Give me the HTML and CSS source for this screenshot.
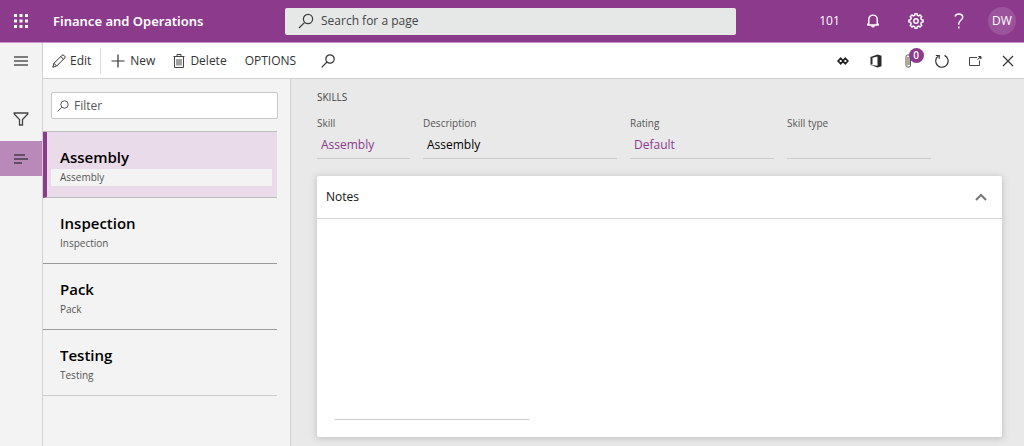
FILE: index.html
```html
<!DOCTYPE html>
<html lang="en">
<head>
<meta charset="utf-8">
<meta name="viewport" content="width=device-width, initial-scale=1">
<title>Finance and Operations</title>
<link rel="stylesheet" href="styles.css">
</head>
<body>
<div class="app">
  <header class="topbar">
    <div class="brand">
      <button class="waffle" type="button" aria-label="App launcher">
        <svg width="16" height="16" viewBox="0 0 16 16" fill="#fff"><path d="M1 1h3v3H1zM6.500 1h3v3h-3zM12 1h3v3h-3zM1 6.500h3v3H1zM6.500 6.500h3v3h-3zM12 6.500h3v3h-3zM1 12h3v3H1zM6.500 12h3v3h-3zM12 12h3v3h-3z"/></svg>
      </button>
      <a class="brand-name" href="#">Finance and Operations</a>
    </div>
    <div class="page-search">
      <svg width="16" height="16" viewBox="0 0 16 16" fill="none" stroke="#3a3a3a" stroke-width="1.200"><circle cx="10" cy="6" r="4.600"/><path d="M6.700 9.300 1 15"/></svg>
      <input class="page-search-input" type="text" placeholder="Search for a page" aria-label="Search for a page">
    </div>
    <nav class="top-actions" aria-label="Account">
      <button class="top-btn" type="button">101</button>
      <button class="top-btn" type="button" aria-label="Notifications">
        <svg width="14" height="16" viewBox="0 0 14 16" fill="none" stroke="#fff" stroke-width="1.400"><path d="M1.300 12h11.400M2.800 12V6.300a4.200 4.200 0 0 1 8.400 0V12M1.500 12l1.300-2M12.500 12l-1.300-2"/><path d="M5 12.500h4a2 2 0 0 1-4 0z" fill="#fff" stroke="none"/></svg>
      </button>
      <button class="top-btn" type="button" aria-label="Settings">
        <svg width="16" height="16" viewBox="0 0 16 16" fill="none" stroke="#fff" stroke-width="1.400"><path d="M6.700 2.300 7 .8h2l.3 1.500 1.500.6L12 2l1.700 1.700-.9 1.400.6 1.500 1.700.4v2l-1.700.4-.6 1.500.9 1.400L12 14l-1.300-.9-1.500.6L9 15.200H7l-.3-1.500-1.500-.6L4 14l-1.700-1.700.9-1.400-.6-1.500L.9 9V7l1.700-.4.6-1.500-.9-1.400L4 2l1.200.9z"/><circle cx="8" cy="8" r="2.200"/></svg>
      </button>
      <button class="top-btn" type="button" aria-label="Help">
        <svg width="10" height="16" viewBox="0 0 10 16" fill="none" stroke="#fff" stroke-width="1.400"><path d="M1 3.500C1.500 1.800 3 1 4.800 1 7 1 8.700 2.200 8.700 4.200 8.700 7 4.800 7.500 4.800 10.500v1.300"/><path d="M4.800 13.500v2"/></svg>
      </button>
      <button class="top-btn top-account" type="button" aria-label="Account DW"><span class="avatar">DW</span></button>
    </nav>
  </header>

  <div class="shell">
    <nav class="rail" aria-label="Navigation">
      <button class="rail-btn rail-menu" type="button" aria-label="Expand navigation">
        <svg width="16" height="12" viewBox="0 0 16 12" stroke="#555" stroke-width="1.400"><path d="M1 2h14M1 6h14M1 10h14"/></svg>
      </button>
      <button class="rail-btn rail-filter" type="button" aria-label="Filters">
        <svg width="16" height="14" viewBox="0 0 16 14" fill="none" stroke="#444" stroke-width="1.300"><path d="M1.200 1h13.600v1L9.500 7.500V13h-3V7.500L1.200 2z"/></svg>
      </button>
      <button class="rail-btn rail-active" type="button" aria-label="List">
        <svg width="16" height="10" viewBox="0 0 16 10" stroke="#4a3a4c" stroke-width="1.300"><path d="M1 1h11M1 5h14M1 9h8"/></svg>
      </button>
    </nav>

    <div class="workspace">
      <div class="toolbar">
        <div class="tools">
          <button class="tool tool-edit" type="button">
            <svg width="14" height="14" viewBox="0 0 14 14" fill="none" stroke="#333"><path d="M.8 13.200 2 9.300 10 1.300a1.300 1.300 0 0 1 1.800 0l.9.900a1.300 1.300 0 0 1 0 1.800L4.700 12zM2 9.300 4.700 12M8.800 2.500l2.700 2.700"/></svg>
            <span>Edit</span>
          </button>
          <button class="tool tool-new" type="button">
            <svg width="14" height="14" viewBox="0 0 14 14" stroke="#333" stroke-width="1.200"><path d="M7 .5v13M.5 7h13"/></svg>
            <span>New</span>
          </button>
          <button class="tool tool-delete" type="button">
            <svg width="12" height="14" viewBox="0 0 12 14" fill="none" stroke="#444"><path d="M.5 2.500h11M4 2.500v-2h4v2M1.500 2.500v11h9v-11M4 5v6.500M6 5v6.500M8 5v6.500"/></svg>
            <span>Delete</span>
          </button>
          <button class="tool tool-options" type="button">OPTIONS</button>
          <button class="tool" type="button" aria-label="Search actions">
            <svg width="14" height="14" viewBox="0 0 14 14" fill="none" stroke="#333" stroke-width="1.200"><circle cx="9" cy="5" r="4.200"/><path d="M6 8 .7 13.300"/></svg>
          </button>
        </div>
        <div class="tool-icons">
          <button class="icon-btn" type="button" aria-label="Connect">
            <svg width="12" height="8" viewBox="0 0 12 8" fill="none" stroke="#222" stroke-width="1.700"><path d="M3.700 1.300 6.300 4 3.700 6.700 1.100 4zM8.300 1.300 10.900 4 8.300 6.700 5.700 4z"/></svg>
          </button>
          <button class="icon-btn" type="button" aria-label="Open in Microsoft Office">
            <svg width="12" height="14" viewBox="0 0 12 14" fill="#2b2b2b"><path fill-rule="evenodd" d="M.5 3 7.500.5l4 1.200v10.600l-4 1.200L.5 11l7 .8V2.600L2.500 3.700v6.500L.5 11z"/></svg>
          </button>
          <button class="icon-btn" type="button" aria-label="Attachments, 0">
            <span class="attach">
              <svg width="8" height="14" viewBox="0 0 8 14" fill="none" stroke="#555"><path d="M1 2.500v9a1.500 1.500 0 0 0 1.500 1.500h1.500a1.500 1.500 0 0 0 1.500-1.500v-9a1.500 1.500 0 0 0-1.500-1.500h-1.500a1.500 1.500 0 0 0-1.500 1.500zM4 3v8"/><path d="M2.500 3v8.500" stroke="#c9a36b"/></svg>
              <span class="badge">0</span>
            </span>
          </button>
          <button class="icon-btn" type="button" aria-label="Refresh">
            <svg width="14" height="14" viewBox="0 0 14 14" fill="none" stroke="#333" stroke-width="1.200"><path d="M9.500 1.400A6.200 6.200 0 1 1 3.300 2"/><path d="M.8 1.500h3.400v3.300"/></svg>
          </button>
          <button class="icon-btn" type="button" aria-label="Open in new window">
            <svg width="14" height="10" viewBox="0 0 14 10" fill="none" stroke="#444"><path d="M9 1.500H1.500v8h10V4.500"/><path d="M9.500 3.500 12 1.500"/><path d="M10.500.500h2.500v2.500z" fill="#444"/></svg>
          </button>
          <button class="icon-btn" type="button" aria-label="Close">
            <svg width="12" height="12" viewBox="0 0 12 12" stroke="#333" stroke-width="1.200"><path d="M1 1l10 10M11 1 1 11"/></svg>
          </button>
        </div>
      </div>

      <div class="content">
        <aside class="list-pane">
          <div class="filter">
            <svg width="12" height="12" viewBox="0 0 12 12" fill="none" stroke="#555"><circle cx="7.500" cy="4.500" r="3.700"/><path d="M4.800 7.200.6 11.400"/></svg>
            <input class="filter-input" type="text" placeholder="Filter" aria-label="Filter">
          </div>
          <ul class="skills">
            <li><button class="skill skill-selected" type="button"><span class="skill-name">Assembly</span><span class="skill-desc">Assembly</span></button></li>
            <li><button class="skill" type="button"><span class="skill-name">Inspection</span><span class="skill-desc">Inspection</span></button></li>
            <li><button class="skill" type="button"><span class="skill-name">Pack</span><span class="skill-desc">Pack</span></button></li>
            <li><button class="skill skill-last" type="button"><span class="skill-name">Testing</span><span class="skill-desc">Testing</span></button></li>
          </ul>
        </aside>

        <main class="detail">
          <h1 class="detail-title">SKILLS</h1>
          <div class="fields">
            <div class="field field-skill"><label for="skill">Skill</label><input class="value value-link" id="skill" type="text" value="Assembly" readonly></div>
            <div class="field field-description"><label for="description">Description</label><input class="value" id="description" type="text" value="Assembly" readonly></div>
            <div class="field field-rating"><label for="rating">Rating</label><input class="value value-link" id="rating" type="text" value="Default" readonly></div>
            <div class="field field-type"><label for="type">Skill type</label><input class="value" id="type" type="text" readonly></div>
          </div>
          <section class="card">
            <button class="card-head" type="button" aria-expanded="true">
              <span>Notes</span>
              <svg width="12" height="8" viewBox="0 0 12 8" fill="none" stroke="#777" stroke-width="2"><path d="M1 7l5-5 5 5"/></svg>
            </button>
            <div class="card-body"><textarea class="notes" aria-label="Notes"></textarea></div>
          </section>
        </main>
      </div>
    </div>
  </div>
</div>
</body>
</html>
```
FILE: styles.css
```css
* { box-sizing: border-box; }

body {
  margin: 0;
  font-family: "Open Sans", "Noto Sans", sans-serif;
  font-size: 12px;
  line-height: 16px;
  color: #333;
}

button, input, textarea {
  margin: 0;
  padding: 0;
  border: 0;
  border-radius: 0;
  background: none;
  font: inherit;
  color: inherit;
  outline: 0;
}

button { cursor: pointer; }
svg { display: block; flex: none; }

.app {
  display: flex;
  flex-direction: column;
  min-height: 100vh;
}

/* Top bar */
.topbar {
  display: grid;
  grid-template-columns: 285px minmax(120px, 451px) 1fr;
  align-items: center;
  height: 43px;
  background: #8c3a8c;
  border-bottom: 1px solid #c995c9;
  color: #fff;
}

.brand { display: flex; align-items: center; }
.waffle { display: flex; justify-content: center; width: 42px; }
.brand-name {
  padding-left: 11px;
  color: #fff;
  font-family: "Noto Sans", "Open Sans", sans-serif;
  font-size: 13px;
  font-weight: 600;
  text-decoration: none;
}

.page-search {
  display: flex;
  align-items: center;
  gap: 7px;
  height: 27px;
  padding: 0 13px;
  border-radius: 2px;
  background: #e6e8e8;
}
.page-search-input { flex: 1; min-width: 0; }
.page-search-input::placeholder { color: #444; opacity: 1; }

.top-actions { display: flex; justify-content: flex-end; }
.top-btn {
  display: flex;
  align-items: center;
  justify-content: center;
  width: 43px;
  height: 42px;
}
.top-account { width: 44px; }
.avatar {
  width: 28px;
  border-radius: 50%;
  background: #9b539b;
  line-height: 28px;
}

/* Navigation rail */
.shell { display: flex; flex: 1; }
.rail {
  display: flex;
  flex-direction: column;
  width: 43px;
  border-right: 1px solid #d2d2d2;
  background: #f3f3f3;
}
.rail-btn {
  display: flex;
  align-items: center;
  justify-content: center;
  height: 35px;
}
.rail-menu { margin-bottom: 23px; }
.rail-filter { margin-bottom: 5px; }
.rail-active { background: #b889b9; }

.workspace { display: flex; flex: 1; flex-direction: column; min-width: 0; }

/* Action bar */
.toolbar {
  display: flex;
  justify-content: space-between;
  height: 36px;
  border-bottom: 1px solid #d0d0d0;
  background: #fff;
}
.tools, .tool-icons, .tool { display: flex; align-items: center; }
.tool { gap: 5px; }
.tool-edit {
  gap: 4px;
  height: 26px;
  padding: 0 9px;
  border-right: 1px solid #ddd;
}
.tool-new { padding-left: 10px; }
.tool-delete { padding-left: 18px; }
.tool-options { padding: 0 25px 0 18px; }
.icon-btn {
  display: flex;
  align-items: center;
  justify-content: center;
  width: 33px;
  height: 35px;
}
.attach { position: relative; }
.badge {
  position: absolute;
  top: -6px;
  left: 4px;
  width: 15px;
  border-radius: 50%;
  background: #8c3a8c;
  color: #fff;
  font-size: 10px;
  font-weight: 600;
  line-height: 15px;
}

/* Record list */
.content { display: flex; flex: 1; }
.list-pane {
  flex: none;
  width: 248px;
  padding-top: 13px;
  border-right: 1px solid #cfcfcf;
  background: #f3f3f3;
}
.filter {
  display: flex;
  align-items: center;
  gap: 5px;
  height: 27px;
  margin: 0 12px 12px 8px;
  padding: 0 5px;
  border: 1px solid #c8c8c8;
  border-radius: 2px;
  background: #fff;
}
.filter-input { flex: 1; min-width: 0; }
.filter-input::placeholder { color: #555; opacity: 1; }

.skills { margin: 0 13px 0 0; padding: 0; border-top: 1px solid #bdbdbd; list-style: none; }
.skill {
  display: flex;
  flex-direction: column;
  width: 100%;
  padding: 14px 5px 11px 8px;
  border-bottom: 1px solid #999;
  text-align: left;
}
.skill span { padding-left: 9px; }
.skill-selected { padding-left: 4px; border-left: 4px solid #8c3a8c; border-bottom-color: #bdbdbd; background: #e9dbe9; }
.skill-last { border-bottom-color: #ccc; }
.skill-name {
  color: #000;
  font-size: 15px;
  font-weight: 600;
  line-height: 23px;
}
.skill-desc { color: #555; font-size: 10px; line-height: 17px; }
.skill-selected .skill-desc { background: #f3f3f3; }

/* Record detail */
.detail {
  display: flex;
  flex: 1;
  flex-direction: column;
  min-width: 0;
  padding: 10px 22px 9px 26px;
  background: #e9e9e9;
}
.detail-title {
  margin: 0 0 10px;
  color: #444;
  font-size: 10px;
  font-weight: 400;
}
.fields { display: flex; gap: 13px; margin-bottom: 17px; }
.field { display: flex; flex-direction: column; min-width: 0; color: #555; font-size: 10px; }
.field-skill { width: 93px; }
.field-description { width: 194px; }
.field-rating, .field-type { width: 144px; }
.value {
  width: 100%;
  height: 28px;
  padding: 0 4px;
  border-bottom: 1px solid #ccc;
  color: #000;
  font-size: 12px;
}
.value-link { color: #8c3a8c; }

.card {
  display: flex;
  flex: 1;
  flex-direction: column;
  border-radius: 2px;
  background: #fff;
  box-shadow: 0 1px 6px 1px #c4c4c4;
}
.card-head {
  display: flex;
  align-items: center;
  justify-content: space-between;
  height: 43px;
  padding: 0 15px 0 9px;
  border-bottom: 1px solid #d6d6d6;
  color: #111;
}
.card-body { display: flex; flex: 1; padding: 8px 18px 17px; }
.notes {
  width: 194px;
  border-bottom: 1px solid #ccc;
  resize: none;
}
```
